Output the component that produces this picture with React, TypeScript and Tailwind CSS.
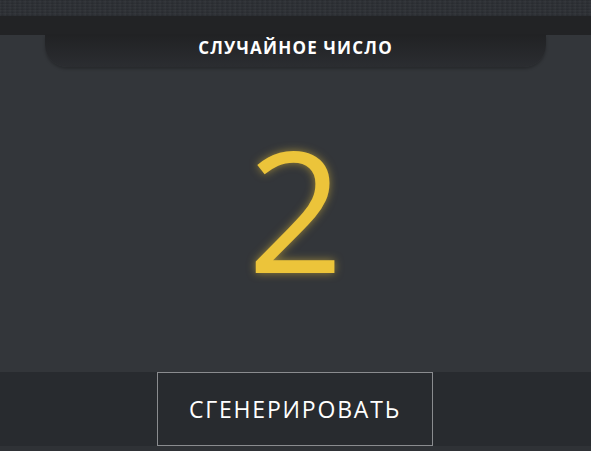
import React from 'react';

const App: React.FC = () => {
  return (
    <div className="h-[451px] w-full flex flex-col bg-[#33363a] overflow-hidden" style={{ fontFamily: '"Open Sans", sans-serif' }}>
      {/* textured top strip */}
      <div
        className="h-[16px] bg-[#2b2e33]"
        style={{
          backgroundImage:
            'repeating-linear-gradient(90deg, rgba(255,255,255,0.03) 0px, rgba(0,0,0,0.06) 2px, rgba(255,255,255,0.02) 5px), repeating-linear-gradient(0deg, rgba(0,0,0,0.05) 0px, rgba(255,255,255,0.03) 3px)',
        }}
      ></div>
      <div className="h-[19px] bg-[#222325]"></div>

      {/* title tab */}
      <div className="mx-[45px] h-[32px] rounded-b-[22px] bg-gradient-to-b from-[#212224] to-[#2b2d31] shadow-[0_2px_3px_rgba(0,0,0,0.25)] flex items-center justify-center">
        <h1 className="text-white font-bold text-[17px] tracking-[1.2px] -mt-[7px]">СЛУЧАЙНОЕ ЧИСЛО</h1>
      </div>

      {/* number */}
      <div className="flex-1 flex items-center justify-center">
        <span
          className="text-[#ecc43a] text-[168px] leading-none -mt-[24px]"
          style={{ textShadow: '0 0 8px rgba(236,196,58,0.55)' }}
        >
          2
        </span>
      </div>

      {/* bottom bar */}
      <div className="h-[74px] bg-[#282b2f] flex justify-center">
        <button className="w-[276px] -ml-[1px] h-full border border-[#8a8c8f] text-white text-[23px] tracking-[1.8px]">
          СГЕНЕРИРОВАТЬ
        </button>
      </div>
      <div className="h-[5px] bg-[#2f3236]"></div>
    </div>
  );
};

export default App;
